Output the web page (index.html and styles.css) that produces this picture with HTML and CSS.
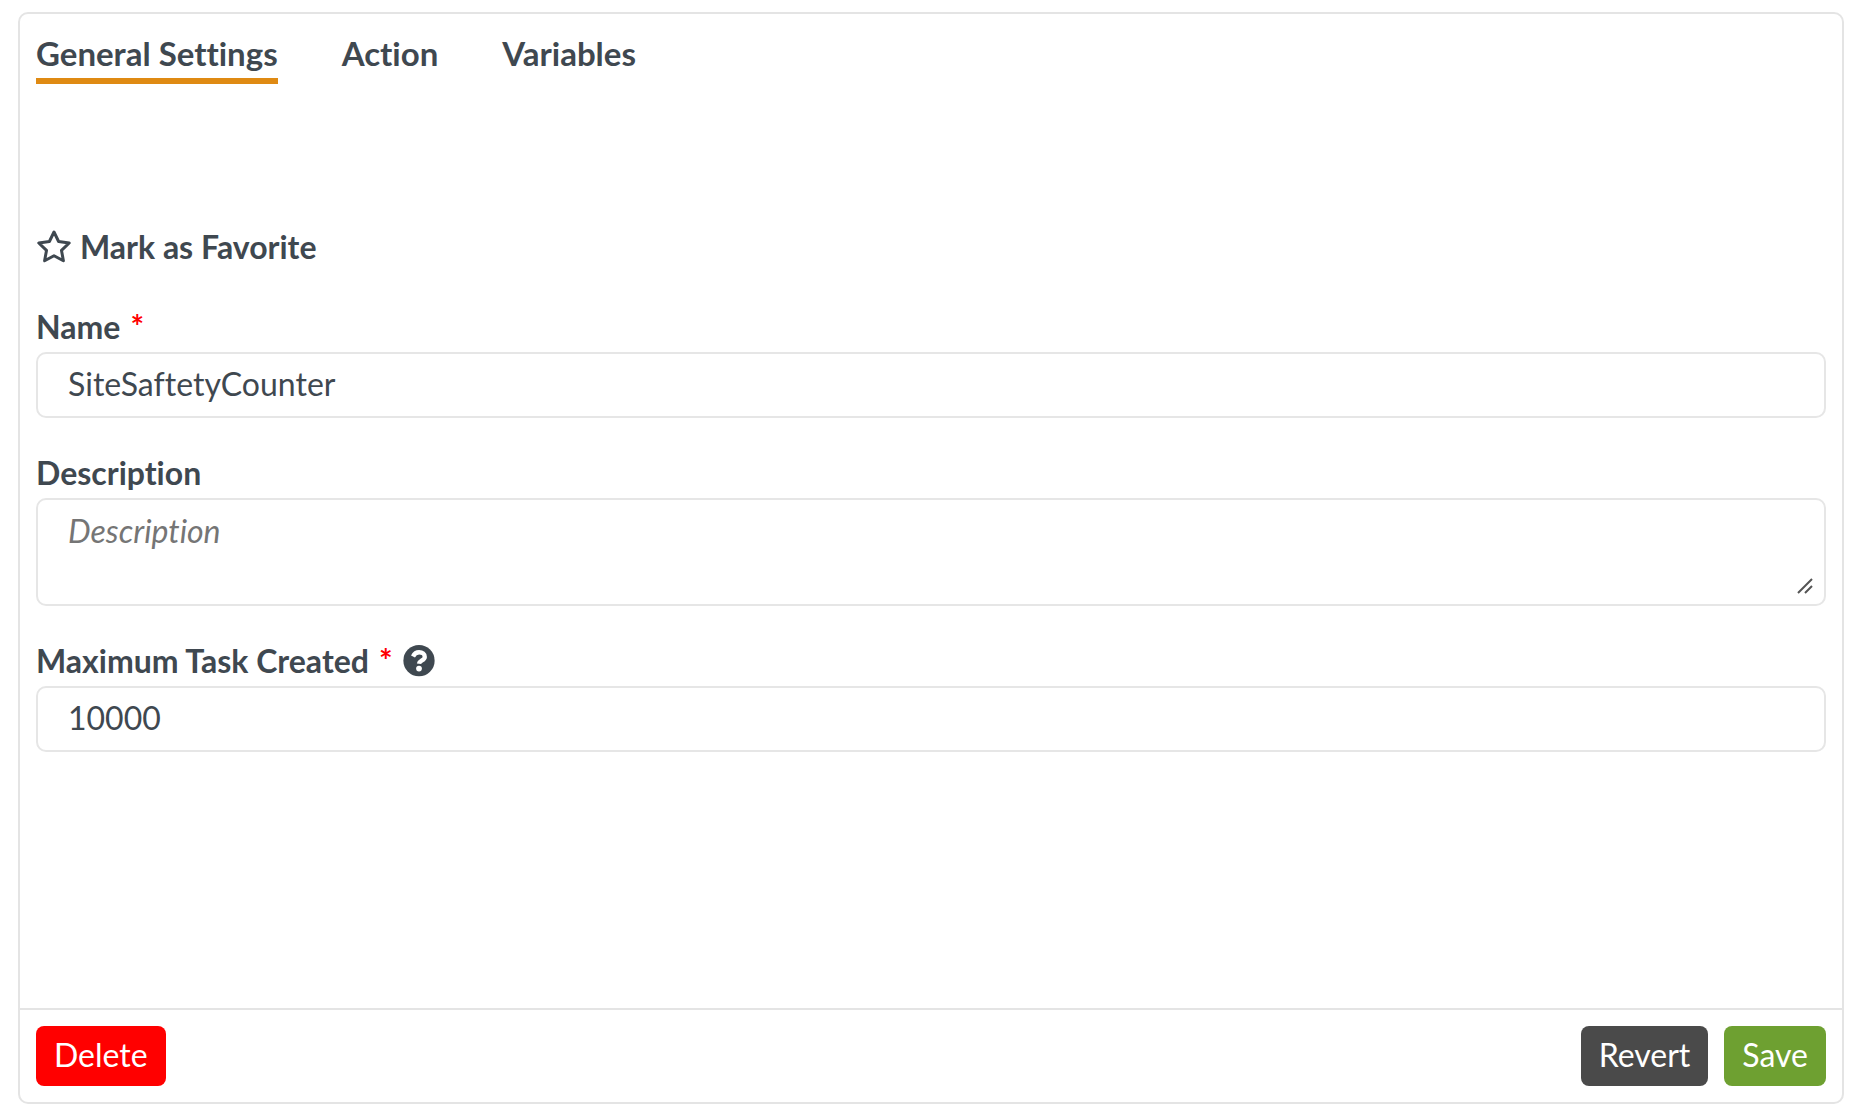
FILE: index.html
```html
<!DOCTYPE html>
<html lang="en">

<head>
    <meta charset="UTF-8">
    <meta name="viewport" content="width=device-width, initial-scale=1.0">
    <title>General Settings</title>
    <link rel="stylesheet" href="styles.css">
</head>

<body>
    <form class="panel">
        <nav class="tabs">
            <a href="#general" class="tab active">General Settings</a>
            <a href="#action" class="tab">Action</a>
            <a href="#variables" class="tab">Variables</a>
        </nav>

        <div class="content" id="general">
            <button type="button" class="favorite">
                <svg class="star" viewBox="0 0 36 34" aria-hidden="true">
                    <path d="M18 2 L22.6 11.5 L33.2 13 L25.5 20.4 L27.4 30.8 L18 25.8 L8.6 30.8 L10.5 20.4 L2.8 13 L13.4 11.5 Z" />
                </svg>
                Mark as Favorite
            </button>

            <div class="field">
                <label for="name">Name <span class="required">*</span></label>
                <input type="text" id="name" value="SiteSaftetyCounter">
            </div>

            <div class="field">
                <label for="description">Description</label>
                <div class="textareaBox">
                    <textarea id="description" placeholder="Description"></textarea>
                    <svg class="grip" viewBox="0 0 16 16" aria-hidden="true">
                        <path d="M1 15 L15 1 M8 15 L15 8" />
                    </svg>
                </div>
            </div>

            <div class="field">
                <label for="maxTask">Maximum Task Created <span class="required">*</span>
                    <svg class="help" viewBox="0 0 512 512" aria-hidden="true">
                        <circle cx="256" cy="250" r="250" />
                        <path class="mark" d="M160 184 C182 138 212 116 258 116 C310 116 348 146 348 190 C348 246 262 244 256 300" />
                        <circle class="dot" cx="256" cy="376" r="46" />
                    </svg>
                </label>
                <input type="text" id="maxTask" value="10000">
            </div>
        </div>

        <div class="footer">
            <button type="button" class="btn delete">Delete</button>
            <div class="rightButtons">
                <button type="reset" class="btn revert">Revert</button>
                <button type="submit" class="btn save">Save</button>
            </div>
        </div>
    </form>
</body>

</html>
```
FILE: styles.css
```css
* {
    box-sizing: border-box;
}

body {
    margin: 0;
    padding: 12px 20px 16px 18px;
    min-height: 100vh;
    display: flex;
    background-color: #fff;
    font-family: Lato, sans-serif;
    font-size: 32px;
    line-height: 38px;
    font-variant-ligatures: none;
    color: #3f4850;
}

.panel {
    flex: 1;
    display: flex;
    flex-direction: column;
    border: 2px solid #e4e4e4;
    border-radius: 10px;
}

/* Tabs */
.tabs {
    display: flex;
    gap: 64px;
    padding: 20px 16px 0;
}

.tab {
    padding-bottom: 6px;
    border-bottom: 6px solid transparent;
    color: inherit;
    font-size: 33px;
    font-weight: bold;
    text-decoration: none;
}

.tab.active {
    border-bottom-color: #df8a13;
}

/* Form fields */
.content {
    flex: 1;
    padding: 144px 16px 36px;
}

.favorite {
    display: flex;
    align-items: center;
    gap: 8px;
    margin-bottom: 42px;
    padding: 0;
    border: none;
    background: none;
    font: inherit;
    font-variant-ligatures: none;
    font-weight: bold;
    color: inherit;
    cursor: pointer;
}

.star {
    width: 36px;
    height: 34px;
    fill: none;
    stroke: #3f4850;
    stroke-width: 3;
    stroke-linejoin: round;
}

.field {
    margin-bottom: 36px;
}

.field label {
    display: flex;
    align-items: center;
    gap: 10px;
    margin-bottom: 6px;
    font-weight: bold;
}

.required {
    color: #f00;
}

.help {
    width: 32px;
    height: 32px;
    fill: #3f4850;
}

.help .mark {
    fill: none;
    stroke: #fff;
    stroke-width: 70;
}

.help .dot {
    fill: #fff;
}

input,
textarea {
    display: block;
    width: 100%;
    height: 66px;
    padding: 10px 30px 14px;
    border: 2px solid #e6e6e6;
    border-radius: 10px;
    background-color: #fff;
    font: inherit;
    font-variant-ligatures: none;
    color: inherit;
}

textarea {
    height: 108px;
    padding-top: 12px;
    resize: none;
}

textarea::placeholder {
    color: #757575;
    font-style: italic;
}

.textareaBox {
    position: relative;
}

.grip {
    position: absolute;
    right: 13px;
    bottom: 12px;
    width: 16px;
    height: 16px;
    fill: none;
    stroke: #555;
    stroke-width: 2;
}

/* Footer */
.footer {
    display: flex;
    justify-content: space-between;
    padding: 16px;
    border-top: 2px solid #e4e4e4;
}

.rightButtons {
    display: flex;
    gap: 16px;
}

.btn {
    height: 60px;
    padding: 0 18px 2px;
    border: none;
    border-radius: 8px;
    font: inherit;
    color: #fff;
    cursor: pointer;
}

.delete {
    background-color: #f00;
}

.revert {
    background-color: #4a4a4a;
}

.save {
    background-color: #6ea031;
}
```
